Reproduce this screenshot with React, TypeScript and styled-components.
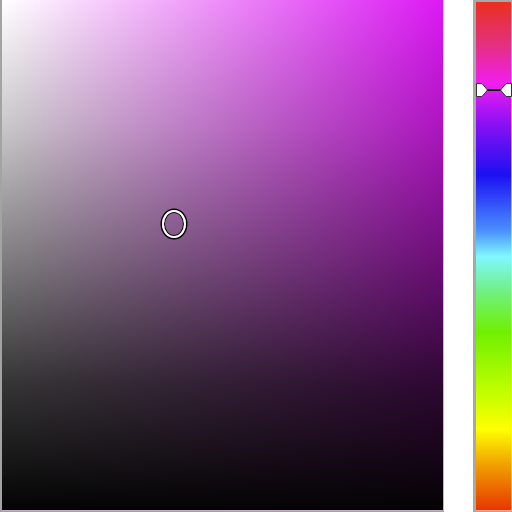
import React from "react";
import styled, { createGlobalStyle } from "styled-components";

const Global = createGlobalStyle`
  html, body { margin: 0; padding: 0; background: #ffffff; overflow: hidden; }
  body { font-family: "Liberation Sans", Arial, sans-serif; }
`;

const Picker = styled.div`
  display: flex;
  gap: 29px;
  width: 512px;
  height: 512px;
  box-sizing: border-box;
`;

const SatValPanel = styled.div<{ $hue: string }>`
  position: relative;
  width: 444px;
  height: 512px;
  box-sizing: border-box;
  border-left: 2px solid #a3a3a3;
  border-bottom: 1px solid #a3a3a3;
  background:
    linear-gradient(
      to top,
      rgba(3, 3, 3, 1) 0%,
      rgba(3, 3, 3, 0.8) 25%,
      rgba(3, 3, 3, 0.5) 50%,
      rgba(3, 3, 3, 0.22) 75%,
      rgba(3, 3, 3, 0) 100%
    ),
    linear-gradient(to right, #ffffff 0%, ${(p) => p.$hue} 100%);
  box-shadow: inset -1px -1px 0 rgba(255, 235, 255, 0.75);
`;

const Cursor = styled.div`
  position: absolute;
  width: 20px;
  height: 24px;
  border: 2px solid #ffffff;
  border-radius: 50%;
  box-shadow: 0 0 0 1.5px #000000, inset 0 0 0 1px #000000;
  transform: translate(-50%, -50%);
`;

const HueBar = styled.div`
  position: relative;
  width: 39px;
  height: 512px;
  box-sizing: border-box;
  border-left: 3px solid #a8a8a8;
  border-top: 2px solid #a8a8a8;
  border-bottom: 1px solid #a8a8a8;
  background: linear-gradient(
    to bottom,
    #ea3020 0%,
    #e4307a 8%,
    #f01ef0 16%,
    #8a10f5 24%,
    #1c10f2 34%,
    #4a90ff 45%,
    #80f8ff 50%,
    #70f080 57%,
    #70f000 65%,
    #c4ff00 77%,
    #ffff00 84%,
    #f0a000 91%,
    #e83400 100%
  );
  box-shadow: inset -1px -1px 0 rgba(255, 220, 220, 0.7);
`;

const HueHandle = styled.svg`
  position: absolute;
  left: 0px;
  width: 36px;
  height: 14px;
  transform: translateY(-50%);
  overflow: visible;
`;

export default function App() {
  const hueColor = "#dc18f4";
  return (
    <>
      <Global />
      <Picker>
        <SatValPanel $hue={hueColor}>
          <Cursor style={{ left: 172, top: 224 }} />
        </SatValPanel>
        <HueBar>
          <HueHandle style={{ top: 88 }} viewBox="0 0 36 14">
            <line x1="10" y1="7" x2="26" y2="7" stroke="#000" strokeWidth="2" />
            <polygon
              points="0.5,0.5 6,0.5 11.5,7 6,13.5 0.5,13.5"
              fill="#fff"
              stroke="#333"
              strokeWidth="1"
            />
            <polygon
              points="35.5,0.5 30,0.5 24.5,7 30,13.5 35.5,13.5"
              fill="#fff"
              stroke="#333"
              strokeWidth="1"
            />
          </HueHandle>
        </HueBar>
      </Picker>
    </>
  );
}
